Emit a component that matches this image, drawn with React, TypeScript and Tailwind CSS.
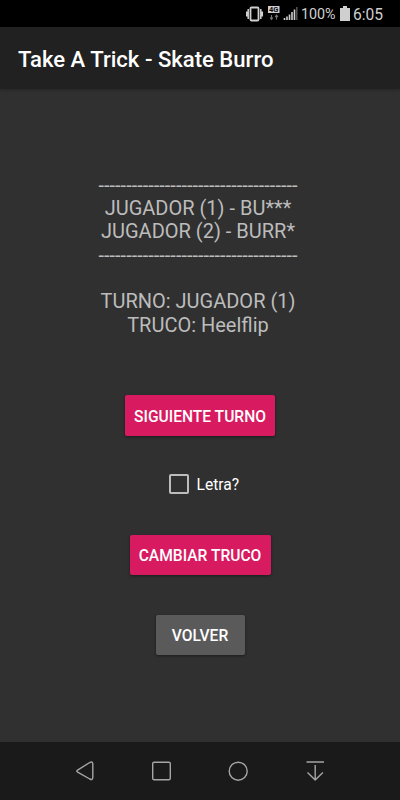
import React from "react";

const RULE = "-".repeat(36);

function StatusBar() {
  return (
    <div className="flex h-[27px] shrink-0 items-center justify-end bg-black pr-[17px] text-[#cfcfcf]">
      <svg width="56" height="27" viewBox="0 0 56 27" className="shrink-0" fill="none">
        <rect x="4.500" y="7.500" width="8" height="13" rx="1" stroke="#cfcfcf" strokeWidth="1.800" />
        <path d="M2.200 9v10M14.800 9v10M0.700 11.500v5M16.300 11.500v5" stroke="#cfcfcf" strokeWidth="1.500" />
        <rect x="22" y="6" width="11.500" height="7" fill="#cfcfcf" />
        <text x="27.700" y="12.200" textAnchor="middle" fontSize="7.500" fontWeight="700" fill="#111" fontFamily="Roboto, sans-serif">4G</text>
        <path d="M25.500 15v4.500M24 17.500l1.500 1.800 1.500-1.800M30.500 19.500V15M29 17l1.500-1.800 1.500 1.800" stroke="#777" strokeWidth="1.100" />
        <path d="M38.500 20v-2M41 20v-3.500M43.500 20v-5.500M46 20v-8M48.500 20v-10.500" stroke="#cfcfcf" strokeWidth="1.600" />
        <path d="M50.800 20V7" stroke="#555" strokeWidth="1.500" />
      </svg>
      <span className="ml-[-1px] w-[35px] pt-px text-[14.300px] leading-none whitespace-nowrap">100%</span>
      <svg width="10" height="15" viewBox="0 0 10 15" className="ml-[4px] shrink-0">
        <path d="M3 0h4v2h3v13H0V2h3z" fill="#cfcfcf" />
      </svg>
      <span className="ml-[3px] w-[30px] pt-[4px] text-[15.600px] leading-none whitespace-nowrap">6:05</span>
    </div>
  );
}

function NavigationBar() {
  return (
    <nav className="flex h-[58px] shrink-0 items-center bg-[#1a1a1a] pl-[75px]">
      <svg width="250" height="24" viewBox="0 0 250 24" fill="none" stroke="#a5a5a5" strokeWidth="1.400" strokeLinejoin="round">
        <path d="M2.600 11.200 14.800 3.500Q17.800 2 17.800 5V18.500Q17.800 21.500 14.800 20L2.600 13.100Q1 12.200 2.600 11.200Z" />
        <rect x="77.700" y="3.200" width="17.600" height="17.600" rx="1.500" />
        <circle cx="163.200" cy="12.200" r="9" />
        <path d="M231.500 3H249M240.200 6V21M232.500 13.500l7.700 7.500 7.700-7.500" />
      </svg>
    </nav>
  );
}

export default function App() {
  return (
    <div className="flex h-[800px] w-[400px] flex-col overflow-hidden bg-[#303030] font-['Roboto',sans-serif]">
      <StatusBar />
      <header className="flex h-[62px] shrink-0 items-center bg-[#212121] pt-[2px] pl-[18px] shadow-[0_1px_3px_rgba(0,0,0,0.25)]">
        <h1 className="text-[22.100px] font-medium leading-none whitespace-nowrap text-white">Take A Trick - Skate Burro</h1>
      </header>
      <main className="flex grow flex-col items-center">
        <div className="mt-[84.800px] mr-[4px] text-center text-[20px] leading-[23.300px] whitespace-nowrap text-[#bcbcbc]">
          <p>{RULE}</p>
          <p>JUGADOR (1) - BU***</p>
          <p>JUGADOR (2) - BURR*</p>
          <p>{RULE}</p>
          <p>&nbsp;</p>
          <p>TURNO: JUGADOR (1)</p>
          <p>TRUCO: Heelflip</p>
        </div>
        <button className="mt-[58.200px] h-[41px] w-[150px] rounded-[2px] bg-[#d81b60] pt-[4px] text-[15.600px] font-medium whitespace-nowrap text-white shadow-[0_1px_3px_rgba(0,0,0,0.45)]">
          SIGUIENTE TURNO
        </button>
        <label className="mt-[37px] mr-[-8px] flex h-[22px] items-center gap-[8px]">
          <span className="h-[20px] w-[20px] rounded-[2px] border-2 border-[#bcbcbc]" />
          <span className="w-[43px] pt-[3px] text-[15.600px] leading-none whitespace-nowrap text-white">Letra?</span>
        </label>
        <button className="mt-[40px] h-[40px] w-[141px] rounded-[2px] bg-[#d81b60] pt-[3px] text-[15.600px] font-medium whitespace-nowrap text-white shadow-[0_1px_3px_rgba(0,0,0,0.45)]">
          CAMBIAR TRUCO
        </button>
        <button className="mt-[40px] h-[40px] w-[89px] rounded-[2px] bg-[#5a5a5b] pt-[3px] text-[15.600px] font-medium whitespace-nowrap text-white shadow-[0_1px_3px_rgba(0,0,0,0.45)]">
          VOLVER
        </button>
      </main>
      <NavigationBar />
    </div>
  );
}
